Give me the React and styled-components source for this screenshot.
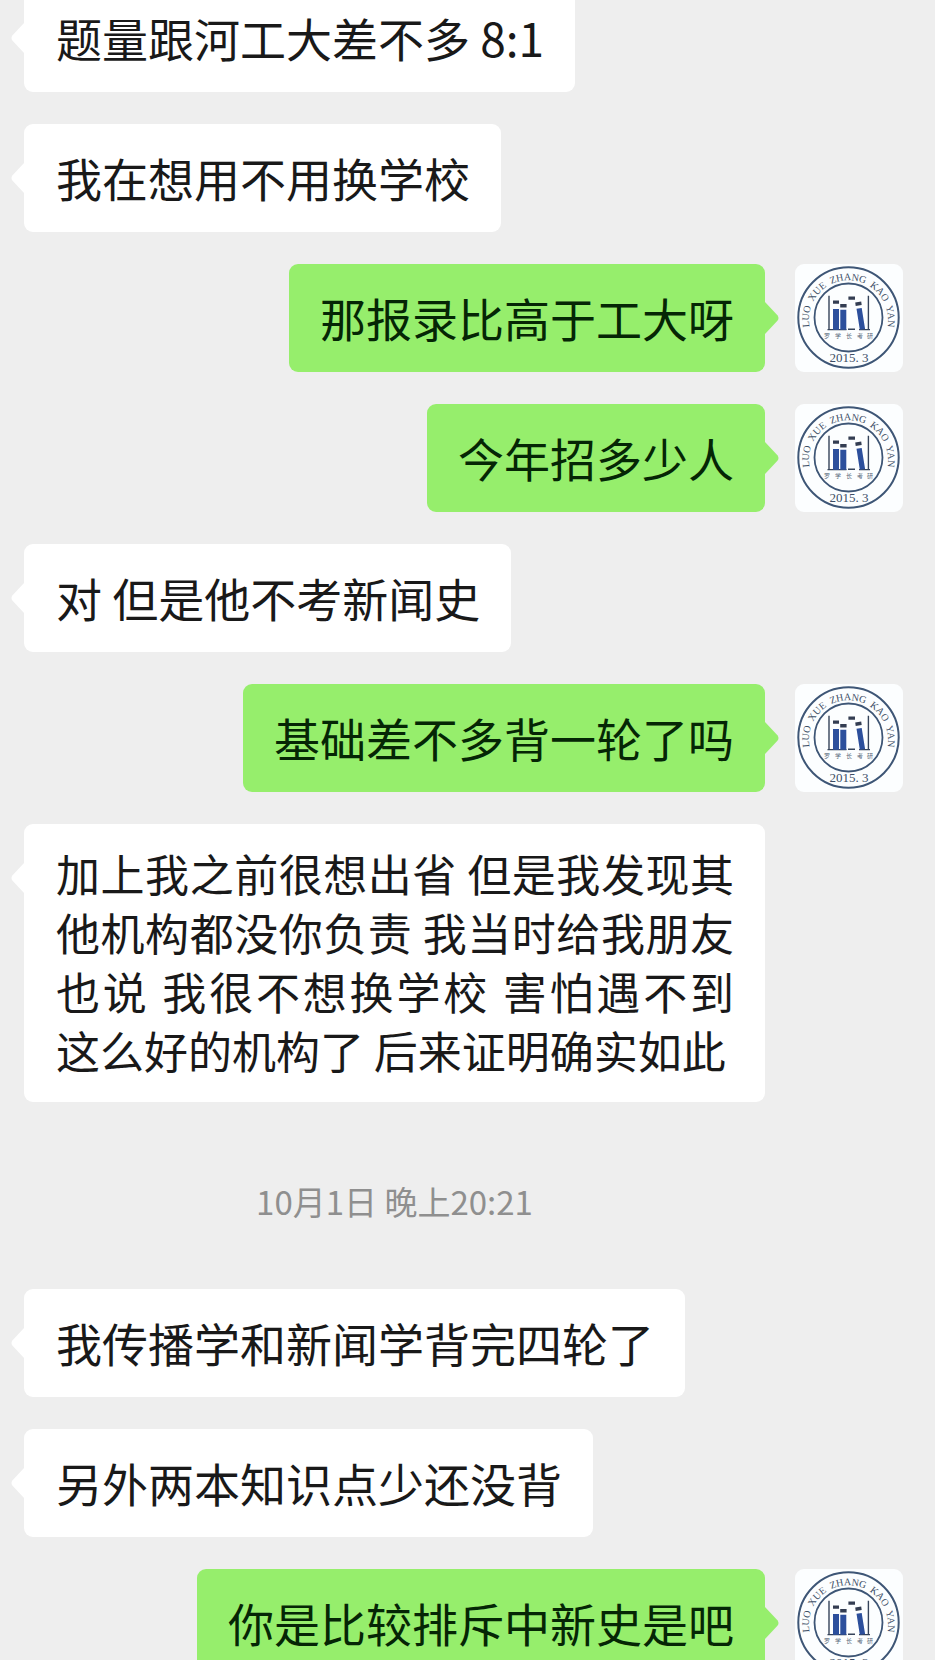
import React from "react";
import styled, { createGlobalStyle, css } from "styled-components";

const GlobalStyle = createGlobalStyle`
  *, *::before, *::after { box-sizing: border-box; }
  body {
    margin: 0;
    background: #eeeeee;
    font-family: "Noto Sans CJK SC", "Noto Sans", sans-serif;
  }
`;

const Screen = styled.main`
  height: 100vh;
  overflow: hidden;
  background: #eeeeee;
`;

const MessageList = styled.ol`
  display: flex;
  flex-direction: column;
  gap: 32px;
  margin: -16px 0 0;
  padding: 0 32px 0 24px;
  list-style: none;
`;

const MessageRow = styled.li`
  display: flex;
  align-items: flex-start;
  gap: 30px;
  justify-content: ${(p) => (p.$sent ? "flex-end" : "flex-start")};
  padding-right: ${(p) => (p.$sent ? "0" : "138px")};
`;

const Bubble = styled.div`
  position: relative;
  display: flex;
  align-items: center;
  min-height: 108px;
  padding: ${(p) => (p.$sent ? "20px 31px 22px" : "20px 31px 22px 32px")};
  border-radius: 9px;
  background: ${(p) => (p.$sent ? "#96ee6c" : "#ffffff")};
  color: ${(p) => (p.$sent ? "#052605" : "#191919")};
`;

const BubbleText = styled.p`
  margin: 0;
  font-size: ${(p) => (p.$long ? "44px" : "46px")};
  line-height: 59px;
  text-align: justify;
`;

const Tail = styled.svg`
  position: absolute;
  top: 38px;
  width: 15px;
  height: 32px;
  ${(p) =>
    p.$sent
      ? css`
          right: -14px;
          fill: #96ee6c;
        `
      : css`
          left: -13px;
          fill: #ffffff;
          transform: scaleX(-1);
        `}
`;

const TimeRow = styled.li`
  padding: 43px 138px 32px 0;
  font-size: 33px;
  line-height: 48px;
  text-align: center;
  color: #8f8f8f;
`;

const AvatarImage = styled.svg`
  flex: none;
  width: 108px;
  height: 108px;
  border-radius: 9px;
  background: #fcfeff;
`;

const SealText = styled.text`
  font-family: "Liberation Serif", serif;
  fill: #3d4e66;
  white-space: pre;
`;

const SealCaption = styled.text`
  font-family: "Noto Sans CJK SC", sans-serif;
  font-size: 6px;
  fill: #59697c;
`;

function Avatar({ id }) {
  const arc = `seal-arc-${id}`;
  return (
    <AvatarImage viewBox="0 0 108 108" role="img" aria-label="罗学长考研">
      <defs>
        <path id={arc} d="M14.5 62 A39.5 39.5 0 1 1 92.5 62" />
      </defs>
      <g fill="none" stroke="#3e5676">
        <circle cx="53.5" cy="53.5" r="50.2" strokeWidth="2" />
        <circle cx="53.5" cy="53.5" r="34" strokeWidth="1.8" />
      </g>
      <SealText fontSize="10" textAnchor="middle">
        <textPath href={`#${arc}`} startOffset="50%">
          {"LUO  XUE  ZHANG  KAO  YAN"}
        </textPath>
      </SealText>
      <SealText x="54" y="98" fontSize="13" textAnchor="middle">
        2015. 3
      </SealText>
      <g fill="none" stroke="#35435a" strokeWidth="1.4">
        <path d="M34 31.7V65.5M73.4 31.7V65.5M32.5 65.6H51.5M64 65.6H75M53 65.2H60" />
      </g>
      <g fill="#333d52">
        <path d="M38 36.4h6v3.4h-6zM45.2 40h6.4v3.4h-6.4zM53.4 32.5h6.6v3.2h-6.6zM60.2 38.6l6-1 .5 3.4-6 1z" />
      </g>
      <g fill="#2c4f9c">
        <path d="M38 45h6v20.7h-6zM45.3 45.7h6v20h-6zM61.5 44.8l5.2-.8 3.4 21-5.3.7z" />
      </g>
      <SealCaption x="29 40 51 62 72" y="74">
        罗学长考研
      </SealCaption>
    </AvatarImage>
  );
}

function Message({ id, sent, long, children }) {
  return (
    <MessageRow $sent={sent}>
      <Bubble $sent={sent}>
        <Tail $sent={sent} viewBox="0 0 15 32" aria-hidden="true">
          <path d="M0 0H1L13.4 13.2Q15.6 16 13.4 18.8L1 32H0Z" />
        </Tail>
        <BubbleText $long={long}>{children}</BubbleText>
      </Bubble>
      {sent && <Avatar id={id} />}
    </MessageRow>
  );
}

const conversation = [
  { text: "题量跟河工大差不多 8:1" },
  { text: "我在想用不用换学校" },
  { text: "那报录比高于工大呀", sent: true },
  { text: "今年招多少人", sent: true },
  { text: "对 但是他不考新闻史" },
  { text: "基础差不多背一轮了吗", sent: true },
  {
    text: "加上我之前很想出省 但是我发现其他机构都没你负责 我当时给我朋友也说 我很不想换学校 害怕遇不到这么好的机构了 后来证明确实如此",
    long: true,
  },
  { time: "10月1日 晚上20:21" },
  { text: "我传播学和新闻学背完四轮了" },
  { text: "另外两本知识点少还没背" },
  { text: "你是比较排斥中新史是吧", sent: true },
];

export default function App() {
  return (
    <>
      <GlobalStyle />
      <Screen>
        <MessageList>
          {conversation.map((item, i) =>
            item.time ? (
              <TimeRow key={i}>
                <time>{item.time}</time>
              </TimeRow>
            ) : (
              <Message key={i} id={i} sent={item.sent} long={item.long}>
                {item.text}
              </Message>
            )
          )}
        </MessageList>
      </Screen>
    </>
  );
}
